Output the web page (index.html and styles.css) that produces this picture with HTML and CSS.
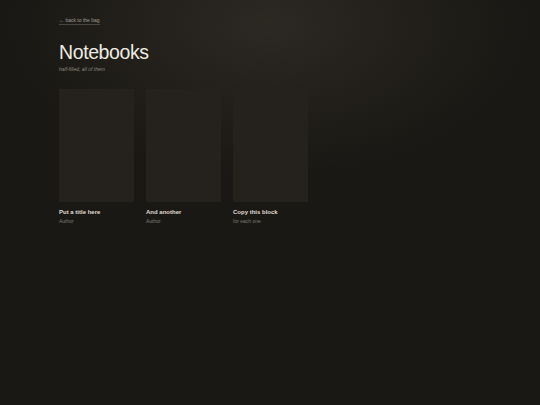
FILE: index.html
```html
<!DOCTYPE html>
<html lang="en">
<head>
<meta charset="utf-8">
<title>Notebooks</title>
<link rel="stylesheet" href="styles.css">
</head>
<body>
<main class="page">
  <a class="back" href="#">← back to the bag</a>
  <h1 class="title">Notebooks</h1>
  <p class="subtitle">half-filled, all of them</p>
  <div class="shelf">
    <div class="book">
      <div class="cover"></div>
      <div class="book-title">Put a title here</div>
      <div class="book-author">Author</div>
    </div>
    <div class="book">
      <div class="cover"></div>
      <div class="book-title">And another</div>
      <div class="book-author">Author</div>
    </div>
    <div class="book">
      <div class="cover"></div>
      <div class="book-title">Copy this block</div>
      <div class="book-author">for each one</div>
    </div>
  </div>
</main>
</body>
</html>
```
FILE: styles.css
```css
html, body {
  margin: 0;
  height: 100%;
}
body {
  background: radial-gradient(ellipse 260px 150px at 268px 25px, #2c2822 0%, #24211c 45%, #191814 100%), #191814;
  background-color: #191814;
  font-family: "Liberation Sans", Arial, sans-serif;
  color: #e6e2d8;
}
.page {
  padding: 17px 0 0 59px;
  display: flex;
  flex-direction: column;
  align-items: flex-start;
}
.back {
  font-size: 5px;
  color: #a29d92;
  text-decoration: none;
  border-bottom: 1px solid #4a463f;
  padding-bottom: 1px;
  line-height: 6px;
}
.title {
  margin: 16px 0 0 0;
  font-size: 19.5px;
  font-weight: normal;
  letter-spacing: -0.4px;
  line-height: 22px;
  color: #efebe1;
}
.subtitle {
  margin: 3px 0 0 0;
  font-size: 5px;
  font-style: italic;
  color: #8c877d;
  line-height: 6px;
}
.shelf {
  margin-top: 17px;
  display: flex;
  gap: 12px;
}
.book {
  width: 75px;
  display: flex;
  flex-direction: column;
}
.cover {
  height: 113px;
  background: #25221e;
}
.book-title {
  margin-top: 7px;
  font-size: 6px;
  font-weight: bold;
  color: #e0dbd1;
  line-height: 7px;
}
.book-author {
  margin-top: 2px;
  font-size: 5px;
  color: #7e7a71;
  line-height: 6px;
}
```
